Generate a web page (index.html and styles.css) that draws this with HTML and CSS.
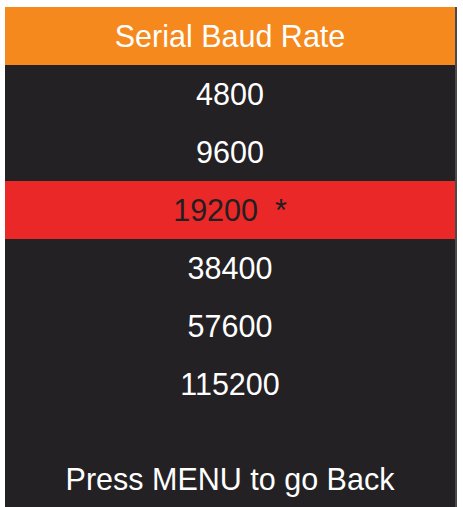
FILE: index.html
```html
<!DOCTYPE html>
<html>
<head>
<meta charset="utf-8">
<link rel="stylesheet" href="styles.css">
</head>
<body>
<div class="panel">
  <div class="header">Serial Baud Rate</div>
  <div class="list">
    <div class="row">4800</div>
    <div class="row">9600</div>
    <div class="row selected">19200&nbsp;&nbsp;*</div>
    <div class="row">38400</div>
    <div class="row">57600</div>
    <div class="row">115200</div>
  </div>
  <div class="footer">Press MENU to go Back</div>
</div>
</body>
</html>
```
FILE: styles.css
```css
html, body {
  margin: 0;
  padding: 0;
  background: #ffffff;
  overflow: hidden;
}
.panel {
  margin: 7px 0 0 5px;
  width: 452px;
  height: 520px;
  background: #232124;
  border-right: 2px solid #4a4a4c;
  box-sizing: border-box;
  font-family: "Liberation Sans", Arial, sans-serif;
  font-size: 30.5px;
  color: #ffffff;
  display: flex;
  flex-direction: column;
}
.header {
  background: #f6891d;
  height: 58px;
  line-height: 58px;
  text-align: center;
}
.list {
  display: flex;
  flex-direction: column;
}
.row {
  height: 58px;
  line-height: 58px;
  text-align: center;
}
.selected {
  background: #ea2828;
  color: #231f20;
}
.footer {
  margin-top: 46px;
  line-height: 40px;
  text-align: center;
}
```
